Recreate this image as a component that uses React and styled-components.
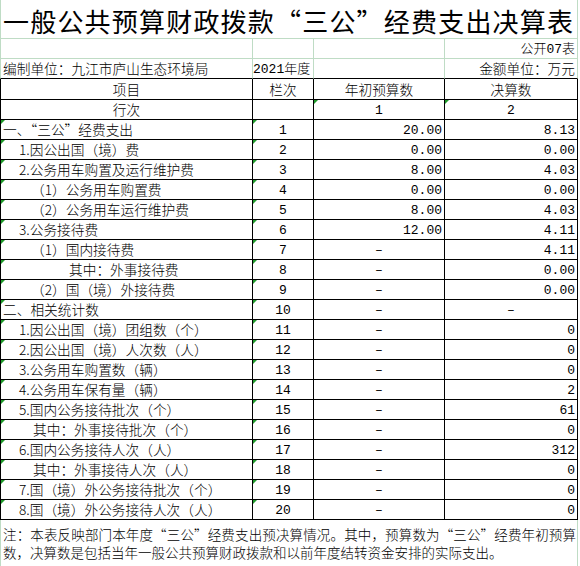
import React from 'react';
import styled, { createGlobalStyle } from 'styled-components';

const GRID = '#bfdcc5';
const INK = '#000';

const GlobalStyle = createGlobalStyle`
  html, body {
    margin: 0;
    padding: 0;
    background: #fff;
  }
  body {
    font-family: "Noto Sans CJK SC", sans-serif;
    color: #000;
  }
`;

const Sheet = styled.div`
  width: 578px;
  background: #fff;
`;

const Row = styled.div`
  display: grid;
  grid-template-columns: 253px 61px 131px 133px;
  height: ${(p) => p.$h || 20}px;
`;

const Cell = styled.div`
  position: relative;
  box-sizing: border-box;
  height: 100%;
  grid-column: ${(p) => (p.$span ? '1 / -1' : 'auto')};
  border-right: 1px solid ${(p) => p.$line || INK};
  border-bottom: 1px solid ${(p) => p.$bottom || p.$line || INK};
  border-left: ${(p) => (p.$first ? `1px solid ${p.$line || INK}` : 'none')};
  display: flex;
  align-items: center;
  justify-content: ${(p) =>
    p.$align === 'center' ? 'center' : p.$align === 'right' ? 'flex-end' : 'flex-start'};
  padding: 1px ${(p) => (p.$align === 'right' ? 2 : 0)}px 0 ${(p) => p.$pad || 0}px;
  font-family: ${(p) =>
    p.$mono ? '"Liberation Mono", "Noto Sans CJK SC", monospace' : '"Noto Sans CJK SC", sans-serif'};
  font-size: ${(p) => (p.$mono ? '13px' : '13.7px')};
  font-weight: 300;
  white-space: nowrap;
  line-height: 1;

  &::before {
    content: '';
    display: ${(p) => (p.$flag ? 'block' : 'none')};
    position: absolute;
    top: 0;
    left: 0;
    border-top: 4px solid #1f9a2a;
    border-right: 4px solid transparent;
  }
`;

const Title = styled(Cell)`
  font-size: 26px;
  font-weight: 400;
  letter-spacing: 1.2px;
  padding: 3px 0 0 2px;
`;

const Note = styled(Cell)`
  display: block;
  white-space: normal;
  font-size: 13.5px;
  text-align: justify;
  text-align-last: left;
  line-height: 18px;
  padding: 5px 1px 0 2px;
`;

const rows = [
  { name: '一、“三公”经费支出', pad: 2, budget: '20.00', final: '8.13' },
  { name: '1.因公出国（境）费', pad: 18, budget: '0.00', final: '0.00' },
  { name: '2.公务用车购置及运行维护费', pad: 18, budget: '8.00', final: '4.03' },
  { name: '（1）公务用车购置费', pad: 30, budget: '0.00', final: '0.00' },
  { name: '（2）公务用车运行维护费', pad: 30, budget: '8.00', final: '4.03' },
  { name: '3.公务接待费', pad: 18, budget: '12.00', final: '4.11' },
  { name: '（1）国内接待费', pad: 30, budget: '–', final: '4.11' },
  { name: '其中：外事接待费', pad: 68, budget: '–', final: '0.00' },
  { name: '（2）国（境）外接待费', pad: 30, budget: '–', final: '0.00' },
  { name: '二、相关统计数', pad: 2, budget: '–', final: '–' },
  { name: '1.因公出国（境）团组数（个）', pad: 18, budget: '–', final: '0' },
  { name: '2.因公出国（境）人次数（人）', pad: 18, budget: '–', final: '0' },
  { name: '3.公务用车购置数（辆）', pad: 18, budget: '–', final: '0' },
  { name: '4.公务用车保有量（辆）', pad: 18, budget: '–', final: '2' },
  { name: '5.国内公务接待批次（个）', pad: 18, budget: '–', final: '61' },
  { name: '其中：外事接待批次（个）', pad: 32, budget: '–', final: '0' },
  { name: '6.国内公务接待人次（人）', pad: 18, budget: '–', final: '312' },
  { name: '其中：外事接待人次（人）', pad: 32, budget: '–', final: '0' },
  { name: '7.国（境）外公务接待批次（个）', pad: 18, budget: '–', final: '0' },
  { name: '8.国（境）外公务接待人次（人）', pad: 18, budget: '–', final: '0' },
];

const isDash = (v) => v === '–';

const App = () => {
  return (
    <Sheet>
      <GlobalStyle />
      <Row $h={39}>
        <Title $span $first $line={GRID}>
          一般公共预算财政拨款“三公”经费支出决算表
        </Title>
      </Row>

      <Row>
        <Cell $first $line={GRID} />
        <Cell $line={GRID} />
        <Cell $line={GRID} />
        <Cell $line={GRID} $align="right" $mono>公开07表</Cell>
      </Row>
      <Row>
        <Cell $first $line={GRID} $bottom={INK} $pad={2}>编制单位：九江市庐山生态环境局</Cell>
        <Cell $line={GRID} $bottom={INK} $mono>2021年度</Cell>
        <Cell $line={GRID} $bottom={INK} />
        <Cell $line={GRID} $bottom={INK} $align="right">金额单位：万元</Cell>
      </Row>

      <Row $h={21}>
        <Cell $first $align="center">项目</Cell>
        <Cell $align="center">栏次</Cell>
        <Cell $align="center">年初预算数</Cell>
        <Cell $align="center">决算数</Cell>
      </Row>
      <Row>
        <Cell $first $align="center">行次</Cell>
        <Cell />
        <Cell $flag $align="center" $mono>1</Cell>
        <Cell $flag $align="center" $mono>2</Cell>
      </Row>

      {rows.map((r, i) => (
        <Row key={r.name + i}>
          <Cell $first $flag $pad={r.pad}>{r.name}</Cell>
          <Cell $flag $align="center" $mono>{i + 1}</Cell>
          <Cell $align={isDash(r.budget) ? 'center' : 'right'} $mono>{r.budget}</Cell>
          <Cell $align={isDash(r.final) ? 'center' : 'right'} $mono>{r.final}</Cell>
        </Row>
      ))}

      <Row $h={47}>
        <Note $span $first $line={GRID} $bottom="transparent">
          注：本表反映部门本年度“三公”经费支出预决算情况。其中，预算数为“三公”经费年初预算数，决算数是包括当年一般公共预算财政拨款和以前年度结转资金安排的实际支出。
        </Note>
      </Row>
    </Sheet>
  );
};

export default App;
